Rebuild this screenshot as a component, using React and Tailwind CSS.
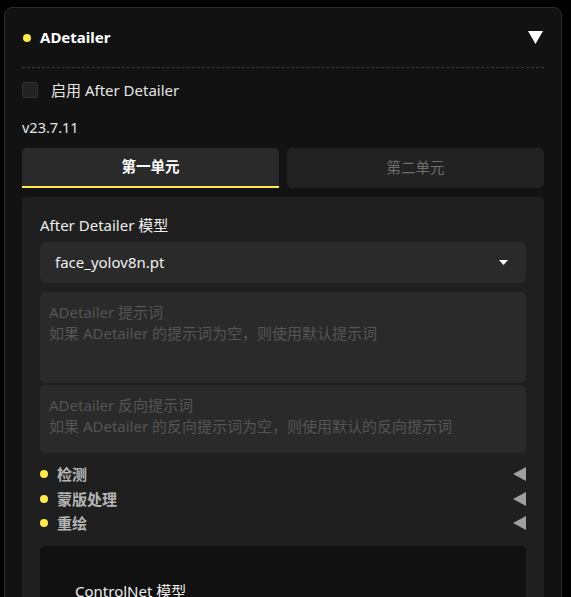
import React from "react";

const Dot = () => <span className="inline-block w-[8px] h-[8px] rounded-full bg-[#ffe94d] shrink-0" />;

function Acc({ label }) {
  return (
    <div className="flex items-center h-[24.5px]">
      <Dot />
      <span className="ml-[9px] text-[15px] font-bold text-[#b5b5b5]">{label}</span>
      <svg className="ml-auto" width="13" height="14" viewBox="0 0 13 14">
        <polygon points="13,0 13,14 0,7" fill="#a0a0a0" />
      </svg>
    </div>
  );
}

export default function App() {
  return (
    <div
      className="w-[571px] h-[597px] bg-black overflow-hidden pl-[4px] pr-[9px] pt-[7px]"
      style={{ fontFamily: '"Noto Sans", "Noto Sans CJK SC", sans-serif' }}
    >
      <div className="h-[620px] bg-[#121212] border border-[#2c2c2c] rounded-t-[8px] px-[17px]">
        <div className="flex items-center h-[60px] pl-[1px] pr-[1px] border-b border-dashed border-[#3a3a3a]">
          <Dot />
          <span className="ml-[9px] text-[15px] font-bold text-white">ADetailer</span>
          <svg className="ml-auto" width="15" height="13" viewBox="0 0 15 13">
            <polygon points="0,0 15,0 7.5,13" fill="#ffffff" />
          </svg>
        </div>
        <div className="flex items-center mt-[13px] h-[18px]">
          <span className="w-[16px] h-[16px] rounded-[3px] bg-[#232323] border border-[#333]" />
          <span className="ml-[13px] text-[15px] text-[#e6e6e6]">启用 After Detailer</span>
        </div>
        <div className="mt-[18px] text-[14.5px] text-[#e6e6e6] leading-[20px]">v23.7.11</div>
        <div className="flex gap-[8px] mt-[11px]">
          <div className="flex-1 h-[40px] bg-[#2a2a2a] rounded-t-[5px] border-b-[2px] border-[#ffe94d] flex items-center justify-center text-[14.5px] font-bold text-white">
            第一单元
          </div>
          <div className="flex-1 h-[40px] bg-[#222222] rounded-[5px] flex items-center justify-center text-[14.5px] text-[#6e6e6e]">
            第二单元
          </div>
        </div>
        <div className="mt-[9px] bg-[#1f1f1f] rounded-t-[5px] px-[18px] pt-[17px] h-[420px]">
          <div className="text-[15px] text-[#eeeeee] leading-[22px]">After Detailer 模型</div>
          <div className="mt-[6px] h-[41px] bg-[#2a2a2a] rounded-[6px] flex items-center pl-[15px] pr-[18px]">
            <span className="text-[15px] text-[#f0f0f0]">face_yolov8n.pt</span>
            <svg className="ml-auto" width="9" height="5" viewBox="0 0 9 5">
              <polygon points="0,0 9,0 4.5,5" fill="#ffffff" />
            </svg>
          </div>
          <div className="mt-[9px] h-[91px] bg-[#2a2a2a] rounded-[5px] px-[9px] pt-[10px] text-[15px] leading-[21px] text-[#555555]">
            <div>ADetailer 提示词</div>
            <div>如果 ADetailer 的提示词为空，则使用默认提示词</div>
          </div>
          <div className="mt-[2px] h-[68px] bg-[#2a2a2a] rounded-[5px] px-[9px] pt-[10px] text-[15px] leading-[21px] text-[#555555]">
            <div>ADetailer 反向提示词</div>
            <div>如果 ADetailer 的反向提示词为空，则使用默认的反向提示词</div>
          </div>
          <div className="mt-[9px]">
            <Acc label="检测" />
            <Acc label="蒙版处理" />
            <Acc label="重绘" />
          </div>
          <div className="mt-[10px] h-[80px] bg-[#111111] rounded-t-[5px] pl-[35px] pt-[34px]">
            <div className="text-[15px] text-[#eeeeee]">ControlNet 模型</div>
          </div>
        </div>
      </div>
    </div>
  );
}
